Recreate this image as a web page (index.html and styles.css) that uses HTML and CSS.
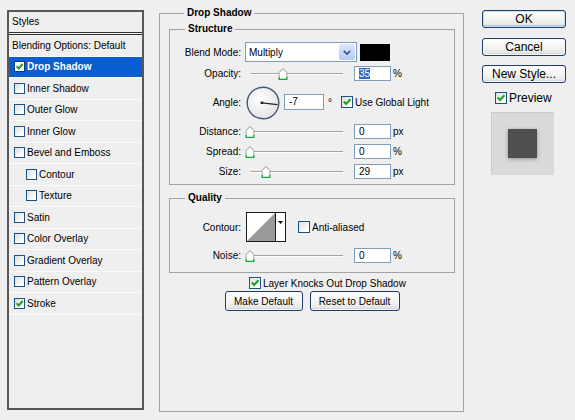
FILE: index.html
```html
<!DOCTYPE html>
<html>
<head>
<meta charset="utf-8">
<link rel="stylesheet" href="styles.css">
</head>
<body>
<div class="dialog">
  <div class="styles-panel">
    <div class="panel-header">Styles</div>
    <ul class="style-list">
      <li class="style-item plain">Blending Options: Default</li>
      <li class="style-item selected"><span class="cb"><svg viewBox="0 0 9 9" width="9" height="9"><path d="M1.6 4.2L3.7 6.4L7.6 2" fill="none" stroke="#21a121" stroke-width="2"/></svg></span>Drop Shadow</li>
      <li class="style-item"><span class="cb"></span>Inner Shadow</li>
      <li class="style-item"><span class="cb"></span>Outer Glow</li>
      <li class="style-item"><span class="cb"></span>Inner Glow</li>
      <li class="style-item"><span class="cb"></span>Bevel and Emboss</li>
      <li class="style-item sub"><span class="cb"></span>Contour</li>
      <li class="style-item sub"><span class="cb"></span>Texture</li>
      <li class="style-item"><span class="cb"></span>Satin</li>
      <li class="style-item"><span class="cb"></span>Color Overlay</li>
      <li class="style-item"><span class="cb"></span>Gradient Overlay</li>
      <li class="style-item"><span class="cb"></span>Pattern Overlay</li>
      <li class="style-item"><span class="cb"><svg viewBox="0 0 9 9" width="9" height="9"><path d="M1.6 4.2L3.7 6.4L7.6 2" fill="none" stroke="#21a121" stroke-width="2"/></svg></span>Stroke</li>
    </ul>
  </div>

  <fieldset class="group outer">
    <legend>Drop Shadow</legend>

    <fieldset class="group structure">
      <legend>Structure</legend>
      <div class="row blend-row">
        <span class="label">Blend Mode:</span>
        <div class="select">
          <span class="select-text">Multiply</span>
          <span class="select-btn"><svg width="8" height="5" viewBox="0 0 8 5"><path d="M0.8 0.8L4 4L7.2 0.8" fill="none" stroke="#3d5584" stroke-width="1.7"/></svg></span>
        </div>
        <span class="swatch"></span>
      </div>
      <div class="row opacity-row">
        <span class="label">Opacity:</span>
        <div class="slider"><span class="track"><span class="thumb" style="left:36%"><svg width="9" height="12" viewBox="0 0 9 12"><path d="M0.5 11.5V4.5L4.5 0.5L8.5 4.5V11.5Z" fill="#fff" stroke="#8a8a8a"/><path d="M0.5 9V11.5H8.5V9" fill="none" stroke="#16a23a" stroke-width="1.6"/></svg></span></span></div>
        <span class="field"><span class="sel">35</span></span><span class="unit">%</span>
      </div>
      <div class="row angle-row">
        <span class="label">Angle:</span>
        <svg class="dial" width="34" height="34" viewBox="0 0 34 34"><defs><radialGradient id="dg" cx="40%" cy="35%" r="70%"><stop offset="0" stop-color="#ffffff"/><stop offset="1" stop-color="#e2e2e2"/></radialGradient></defs><circle cx="17" cy="17" r="15.8" fill="url(#dg)" stroke="#46587a" stroke-width="1.4"/><line x1="16" y1="16.8" x2="31.5" y2="18.6" stroke="#222" stroke-width="1.2"/><rect x="14.6" y="15.6" width="2.6" height="2.4" fill="#222"/></svg>
        <span class="field angle-field">-7</span>
        <span class="deg">°</span>
        <span class="cb gl"><svg viewBox="0 0 10 10" width="10" height="10"><path d="M1.8 4.6L4.1 7L8.4 2.2" fill="none" stroke="#21a121" stroke-width="2.1"/></svg></span>
        <span class="cb-text">Use Global Light</span>
      </div>
      <div class="row">
        <span class="label">Distance:</span>
        <div class="slider"><span class="track"><span class="thumb" style="left:0%"><svg width="9" height="12" viewBox="0 0 9 12"><path d="M0.5 11.5V4.5L4.5 0.5L8.5 4.5V11.5Z" fill="#fff" stroke="#8a8a8a"/><path d="M0.5 9V11.5H8.5V9" fill="none" stroke="#16a23a" stroke-width="1.6"/></svg></span></span></div>
        <span class="field">0</span><span class="unit">px</span>
      </div>
      <div class="row">
        <span class="label">Spread:</span>
        <div class="slider"><span class="track"><span class="thumb" style="left:0%"><svg width="9" height="12" viewBox="0 0 9 12"><path d="M0.5 11.5V4.5L4.5 0.5L8.5 4.5V11.5Z" fill="#fff" stroke="#8a8a8a"/><path d="M0.5 9V11.5H8.5V9" fill="none" stroke="#16a23a" stroke-width="1.6"/></svg></span></span></div>
        <span class="field">0</span><span class="unit">%</span>
      </div>
      <div class="row">
        <span class="label">Size:</span>
        <div class="slider"><span class="track"><span class="thumb" style="left:17%"><svg width="9" height="12" viewBox="0 0 9 12"><path d="M0.5 11.5V4.5L4.5 0.5L8.5 4.5V11.5Z" fill="#fff" stroke="#8a8a8a"/><path d="M0.5 9V11.5H8.5V9" fill="none" stroke="#16a23a" stroke-width="1.6"/></svg></span></span></div>
        <span class="field">29</span><span class="unit">px</span>
      </div>
    </fieldset>

    <fieldset class="group quality">
      <legend>Quality</legend>
      <div class="row contour-row">
        <span class="label">Contour:</span>
        <div class="contour">
          <svg class="contour-curve" width="28" height="28" viewBox="0 0 28 28"><path d="M0 28L28 0V28Z" fill="#9a9a9a"/></svg>
          <span class="contour-btn"><svg width="5" height="3" viewBox="0 0 5 3"><path d="M0 0H5L2.5 3Z" fill="#000"/></svg></span>
        </div>
        <span class="cb aa"></span>
        <span class="cb-text">Anti-aliased</span>
      </div>
      <div class="row noise-row">
        <span class="label">Noise:</span>
        <div class="slider"><span class="track"><span class="thumb" style="left:0%"><svg width="9" height="12" viewBox="0 0 9 12"><path d="M0.5 11.5V4.5L4.5 0.5L8.5 4.5V11.5Z" fill="#fff" stroke="#8a8a8a"/><path d="M0.5 9V11.5H8.5V9" fill="none" stroke="#16a23a" stroke-width="1.6"/></svg></span></span></div>
        <span class="field">0</span><span class="unit">%</span>
      </div>
    </fieldset>

    <div class="knock-row">
      <span class="cb"><svg viewBox="0 0 10 10" width="10" height="10"><path d="M1.8 4.6L4.1 7L8.4 2.2" fill="none" stroke="#21a121" stroke-width="2.1"/></svg></span>
      <span class="cb-text">Layer Knocks Out Drop Shadow</span>
    </div>
    <div class="default-buttons">
      <button class="btn make-default">Make Default</button>
      <button class="btn reset-default">Reset to Default</button>
    </div>
  </fieldset>

  <div class="side">
    <button class="btn side-btn ok">OK</button>
    <button class="btn side-btn cancel">Cancel</button>
    <button class="btn side-btn new-style">New Style...</button>
    <div class="preview-row">
      <span class="cb"><svg viewBox="0 0 10 10" width="10" height="10"><path d="M1.8 4.6L4.1 7L8.4 2.2" fill="none" stroke="#21a121" stroke-width="2.1"/></svg></span>
      <span class="preview-text">Preview</span>
    </div>
    <div class="preview-box"><div class="preview-square"></div></div>
  </div>
</div>
</body>
</html>
```
FILE: styles.css
```css
html, body {
  margin: 0;
  padding: 0;
}
body {
  background: #efefef;
  font-family: "Liberation Sans", Arial, sans-serif;
  font-size: 10px;
  color: #000;
}
.dialog {
  display: flex;
  align-items: flex-start;
  width: 575px;
  height: 420px;
  overflow: hidden;
  padding-left: 7px;
  box-sizing: border-box;
}

/* left styles list */
.styles-panel {
  margin-top: 10px;
  width: 137px;
  height: 400px;
  box-sizing: border-box;
  border: 2px solid #585858;
  background: #efefef;
  flex: none;
}
.panel-header {
  height: 20px;
  line-height: 20px;
  padding-left: 3px;
  border-bottom: 3px double #333;
}
.style-list {
  list-style: none;
  margin: 0;
  padding: 0;
}
.style-item {
  height: 20.5px;
  border-bottom: 1px solid #fbfbfb;
  display: flex;
  align-items: center;
  padding-left: 5px;
  white-space: nowrap;
}
.style-item.plain { padding-left: 3px; }
.style-item.sub { padding-left: 17px; }
.style-item.selected {
  background: #0a5ecf;
  color: #fff;
  font-weight: bold;
}

.cb {
  width: 12px;
  height: 12px;
  box-sizing: border-box;
  border: 1px solid #1c5180;
  background: linear-gradient(135deg, #dcdcd7, #ffffff 80%);
  flex: none;
  display: inline-flex;
  align-items: center;
  justify-content: center;
}
.style-item .cb {
  width: 11px;
  height: 11px;
  margin-right: 2px;
}
.style-item.selected .cb { background: #fff; border-color: #0a3d7a; }
.cb-text { margin-left: 2px; white-space: nowrap; }

/* group boxes */
.group {
  margin: 0;
  padding: 0;
  border: 1px solid #a3a3a3;
  min-inline-size: 0;
}
.group > legend {
  margin-left: 15px;
  padding: 0 3px;
  font-weight: bold;
  line-height: 12px;
}
.outer {
  margin-top: 7px;
  margin-left: 15px;
  width: 305px;
  height: 405px;
  box-sizing: border-box;
  padding: 4px 8px 0 9px;
  flex: none;
}
.structure { padding: 0 0 3px 0; }
.quality { margin-top: 7px; padding: 0 0 7px 0; }

.row {
  display: flex;
  align-items: center;
  height: 20px;
  white-space: nowrap;
}
.blend-row { margin-top: 7px; }
.opacity-row { margin-top: 1px; }
.angle-row { height: 38px; }
.contour-row { margin-top: 8px; height: 30px; }
.noise-row { margin-top: 3px; }

.label {
  width: 75px;
  box-sizing: border-box;
  padding-right: 4px;
  text-align: right;
  flex: none;
}

.select {
  width: 112px;
  height: 20px;
  box-sizing: border-box;
  border: 1px solid #7f9db9;
  background: #fff;
  display: flex;
  align-items: center;
  flex: none;
}
.select-text { flex: 1; padding-left: 3px; }
.select-btn {
  width: 16px;
  height: 16px;
  margin-right: 1px;
  border-radius: 2px;
  background: linear-gradient(#dde7fd, #b5c9f6);
  display: flex;
  align-items: center;
  justify-content: center;
}
.swatch {
  width: 30px;
  height: 17px;
  margin-left: 3px;
  background: #000;
  flex: none;
}

.slider {
  width: 105px;
  height: 100%;
  display: flex;
  align-items: center;
  flex: none;
}
.track {
  position: relative;
  width: 93px;
  height: 0;
  margin-left: 5px;
  margin-top: 2px;
  border-top: 1px solid #a4a39d;
  border-bottom: 1px solid #ffffff;
}
.thumb {
  position: absolute;
  top: 0;
  transform: translate(-50%, -50%);
  width: 9px;
  height: 12px;
  display: block;
}
.thumb svg { display: block; }

.field {
  width: 37px;
  height: 15px;
  margin-left: 4px;
  box-sizing: border-box;
  border: 1px solid #7f9db9;
  background: #fff;
  padding-left: 4px;
  line-height: 13px;
  flex: none;
}
.sel { background: #316ac5; color: #fff; }
.unit { margin-left: 2px; }

.dial { margin-left: 1px; margin-top: 2px; flex: none; }
.angle-field { width: 40px; height: 16px; line-height: 14px; margin-left: 4px; }
.deg { margin-left: 4px; width: 4px; }
.cb.gl { margin-left: 9px; }

.contour {
  width: 40px;
  height: 30px;
  margin-left: 1px;
  box-sizing: border-box;
  border: 1px solid #1a1a1a;
  background: #fff;
  display: flex;
  flex: none;
}
.contour-curve { display: block; flex: none; }
.contour-btn {
  flex: 1;
  border-left: 1px solid #1a1a1a;
  display: flex;
  justify-content: center;
  padding-top: 8px;
  box-sizing: border-box;
}
.contour-btn svg { display: block; }
.cb.aa { margin-left: 12px; }

.knock-row {
  display: flex;
  align-items: center;
  height: 14px;
  margin-top: 3px;
  margin-left: 80px;
}
.default-buttons {
  display: flex;
  justify-content: center;
  gap: 7px;
  margin-top: 1px;
}

.btn {
  height: 20px;
  margin: 0;
  padding: 0;
  box-sizing: border-box;
  border: 1px solid #1f3d66;
  border-radius: 3px;
  background: linear-gradient(#ffffff, #f3f3f1 55%, #e1e1dc);
  box-shadow: inset 0 0 0 1px #f7f9fc, inset 0 -1px 0 1px #d6d9e0;
  font-family: "Liberation Sans", Arial, sans-serif;
  font-size: 10px;
  color: #000;
}
.make-default { width: 78px; }
.reset-default { width: 90px; }

.side {
  margin-left: 18px;
  margin-top: 10px;
  width: 84px;
  display: flex;
  flex-direction: column;
  flex: none;
}
.side-btn {
  width: 84px;
  height: 18px;
  font-size: 12px;
  line-height: 14px;
}
.ok { box-shadow: inset 0 0 0 1px #c9dcf5, inset 0 -1px 0 1px #a9c4ea; }
.cancel { margin-top: 10px; }
.new-style { margin-top: 9px; }
.preview-row {
  display: flex;
  align-items: center;
  height: 14px;
  margin-top: 8px;
  margin-left: 13px;
}
.preview-text { margin-left: 2px; font-size: 12px; }
.preview-box {
  width: 63px;
  height: 63px;
  margin-top: 7px;
  margin-left: 9px;
  background: #dadada;
  box-shadow: inset 1px 1px 0 #cbcbcb;
  display: flex;
  align-items: center;
  justify-content: center;
}
.preview-square {
  width: 29px;
  height: 29px;
  background: #4f4f4f;
  box-shadow: 0 1px 4px rgba(0, 0, 0, 0.35);
}
```
